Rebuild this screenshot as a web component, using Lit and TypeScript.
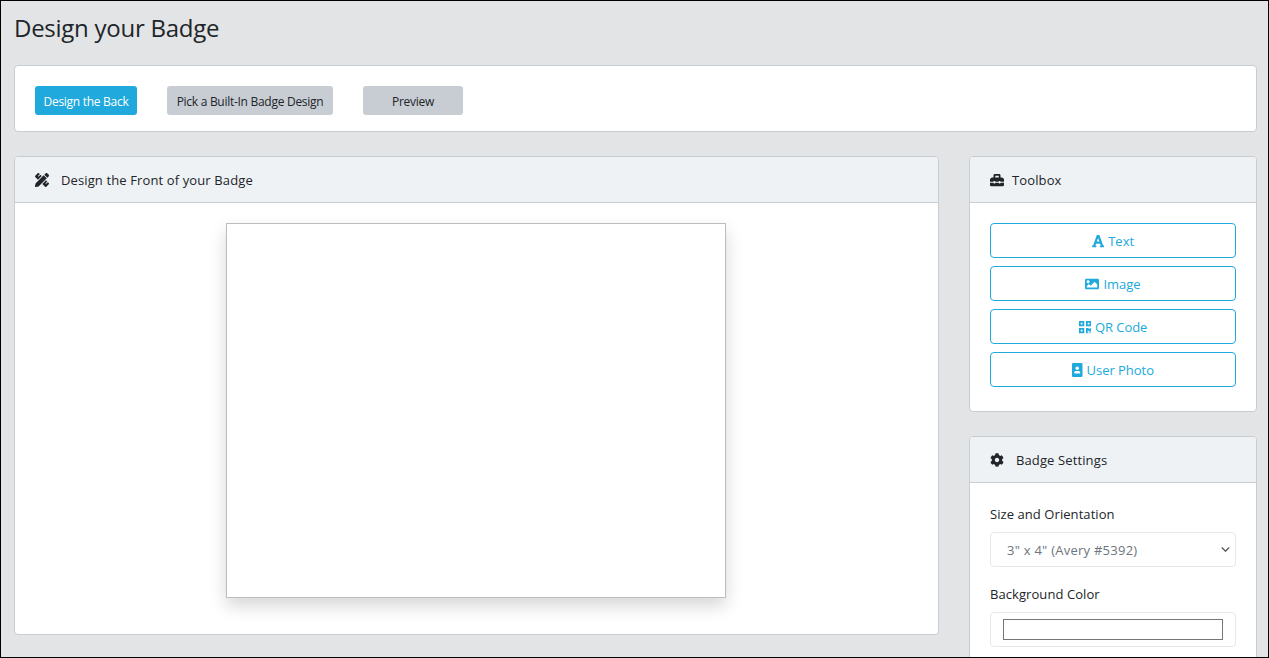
import { LitElement, html, css, svg } from "lit";
import { customElement } from "lit/decorators.js";

const icon = (vb: string, d: string) =>
  html`<svg viewBox=${vb} aria-hidden="true">${svg`<path fill="currentColor" d=${d}></path>`}</svg>`;

const P = {
  ruler: "M109.46 244.04l134.58-134.56-44.12-44.12-61.68 61.68a7.919 7.919 0 0 1-11.21 0l-11.21-11.21c-3.1-3.1-3.1-8.12 0-11.21l61.68-61.68-33.64-33.65C131.47-3.1 111.39-3.1 99 9.29L9.29 99c-12.38 12.39-12.39 32.47 0 44.86l100.17 100.18zm388.47-116.8c18.76-18.76 18.75-49.17 0-67.93l-45.25-45.25c-18.76-18.76-49.18-18.76-67.95 0l-46.02 46.01 113.2 113.2 46.02-46.03zM316.08 82.71l-297 296.96L.32 487.11c-2.53 14.49 10.09 27.11 24.59 24.56l107.45-18.84L429.28 195.9 316.08 82.71zm186.63 285.43l-33.64-33.64-61.68 61.68c-3.1 3.1-8.12 3.1-11.21 0l-11.21-11.21c-3.09-3.1-3.09-8.12 0-11.21l61.68-61.68-44.14-44.14L267.93 402.5l100.21 100.2c12.39 12.39 32.47 12.39 44.86 0l89.71-89.7c12.39-12.39 12.39-32.47 0-44.86z",
  toolbox: "M502.63 214.63l-45.25-45.25c-6-6-14.14-9.37-22.63-9.37H384V80c0-26.51-21.49-48-48-48H176c-26.51 0-48 21.49-48 48v80H77.25c-8.49 0-16.62 3.37-22.63 9.37L9.37 214.63c-6 6-9.37 14.14-9.37 22.63V320h128v-16c0-8.84 7.16-16 16-16h32c8.84 0 16 7.16 16 16v16h128v-16c0-8.84 7.16-16 16-16h32c8.84 0 16 7.16 16 16v16h128v-82.75c0-8.48-3.37-16.62-9.37-22.62zM320 160H192V96h128v64zm64 208c0 8.84-7.16 16-16 16h-32c-8.84 0-16-7.16-16-16v-16H192v16c0 8.84-7.16 16-16 16h-32c-8.84 0-16-7.16-16-16v-16H0v96c0 17.67 14.33 32 32 32h448c17.67 0 32-14.33 32-32v-96H384v16z",
  cog: "M487.4 315.7l-42.6-24.6c4.3-23.2 4.3-47 0-70.2l42.6-24.6c4.9-2.8 7.1-8.6 5.5-14-11.1-35.6-30-67.8-54.7-94.6-3.8-4.1-10-5.1-14.8-2.3L380.8 110c-17.9-15.4-38.5-27.3-60.8-35.1V25.8c0-5.6-3.9-10.5-9.4-11.7-36.7-8.2-74.3-7.8-109.2 0-5.5 1.2-9.4 6.1-9.4 11.7V75c-22.2 7.9-42.8 19.8-60.8 35.1L88.7 85.5c-4.9-2.8-11-1.9-14.8 2.3-24.7 26.7-43.6 58.9-54.7 94.6-1.7 5.4.6 11.2 5.5 14L67.3 221c-4.3 23.2-4.3 47 0 70.2l-42.6 24.6c-4.9 2.8-7.1 8.6-5.5 14 11.1 35.6 30 67.8 54.7 94.6 3.8 4.1 10 5.1 14.8 2.3l42.6-24.6c17.9 15.4 38.5 27.3 60.8 35.1v49.2c0 5.6 3.9 10.5 9.4 11.7 36.7 8.2 74.3 7.8 109.2 0 5.5-1.2 9.4-6.1 9.4-11.7v-49.2c22.2-7.9 42.8-19.8 60.8-35.1l42.6 24.6c4.9 2.8 11 1.9 14.8-2.3 24.7-26.7 43.6-58.9 54.7-94.6 1.5-5.5-.7-11.3-5.6-14.1zM256 336c-44.1 0-80-35.9-80-80s35.9-80 80-80 80 35.9 80 80-35.9 80-80 80z",
  font: "M432 416h-23.41L277.88 53.69A32 32 0 0 0 247.58 32h-47.16a32 32 0 0 0-30.3 21.69L39.41 416H16a16 16 0 0 0-16 16v32a16 16 0 0 0 16 16h128a16 16 0 0 0 16-16v-32a16 16 0 0 0-16-16h-19.58l23.3-64h152.56l23.3 64H304a16 16 0 0 0-16 16v32a16 16 0 0 0 16 16h128a16 16 0 0 0 16-16v-32a16 16 0 0 0-16-16zM176.85 272L224 143.51 271.15 272z",
  image: "M464 448H48c-26.51 0-48-21.49-48-48V112c0-26.51 21.49-48 48-48h416c26.51 0 48 21.49 48 48v288c0 26.51-21.49 48-48 48zM112 120c-30.928 0-56 25.072-56 56s25.072 56 56 56 56-25.072 56-56-25.072-56-56-56zM64 384h384V272l-87.515-87.515c-4.686-4.686-12.284-4.686-16.971 0L208 320l-55.515-55.515c-4.686-4.686-12.284-4.686-16.971 0L64 336v48z",
  qr: "M0 224h192V32H0v192zM64 96h64v64H64V96zm192-64v192h192V32H256zm128 128h-64V96h64v64zM0 480h192V288H0v192zm64-128h64v64H64v-64zm352-64h32v128h-96v-32h-32v96h-64V288h96v32h64v-32zm0 160h32v32h-32v-32zm-64 0h32v32h-32v-32z",
  portrait: "M336 0H48C21.5 0 0 21.5 0 48v416c0 26.5 21.5 48 48 48h288c26.5 0 48-21.5 48-48V48c0-26.5-21.5-48-48-48zM192 128c35.3 0 64 28.7 64 64s-28.7 64-64 64-64-28.7-64-64 28.7-64 64-64zm112 236.8c0 10.6-10 19.2-22.4 19.2H102.4C90 384 80 375.4 80 364.8v-19.2c0-31.8 30.1-57.6 67.2-57.6h5c12.3 5.1 25.7 8 39.8 8s27.6-2.9 39.8-8h5c37.1 0 67.2 25.8 67.2 57.6v19.2z",
};

@customElement("app-root")
export class AppRoot extends LitElement {
  static styles = css`
    :host {
      display: block;
      font-family: "Open Sans", "Noto Sans", sans-serif;
      color: #212529;
    }
    * { box-sizing: border-box; }
    .frame {
      height: 658px;
      overflow: hidden;
      border: 1px solid #000;
      background: #e3e4e6;
      padding: 0 11px 0 13px;
    }
    h1 {
      margin: 0;
      height: 64px;
      padding-top: 9px;
      font-size: 24px;
      font-weight: 400;
      line-height: 36px;
      letter-spacing: -0.26px;
    }
    .card {
      background: #fff;
      border: 1px solid #c8ccd3;
      border-radius: 4px;
    }
    .bar {
      height: 67px;
      display: flex;
      align-items: flex-start;
      gap: 30px;
      padding: 20px 20px 0;
      margin-bottom: 24px;
    }
    .btn {
      height: 29px;
      display: flex;
      align-items: center;
      justify-content: center;
      padding-top: 2px;
      border-radius: 3px;
      font-size: 12px;
      letter-spacing: -0.28px;
      background: #c8ccd3;
      white-space: nowrap;
    }
    .btn.primary { width: 102px; background: #20a9dc; color: #fff; }
    .btn.pick { width: 166px; }
    .btn.preview { width: 100px; }
    .cols {
      display: grid;
      grid-template-columns: 925px 288px;
      column-gap: 30px;
      align-items: start;
    }
    .side { display: flex; flex-direction: column; gap: 24px; }
    .head {
      height: 46px;
      display: flex;
      align-items: center;
      padding: 0 20px;
      background: #eff2f5;
      border-bottom: 1px solid #c8ccd3;
      border-radius: 3px 3px 0 0;
      font-size: 13px;
      letter-spacing: 0.12px;
    }
    .head svg { height: 14px; width: auto; display: block; }
    .gap-wide { margin-left: 12px; }
    .gap-tight { margin-left: 8px; }
    .canvas-body {
      height: 431px;
      display: flex;
      justify-content: center;
      padding: 20px 1px 0 0;
    }
    .badge {
      width: 500px;
      height: 375px;
      background: #fff;
      border: 1px solid #bdbdbd;
      box-shadow: 0 8px 16px rgba(0, 0, 0, 0.16);
    }
    .tools {
      height: 208px;
      padding: 20px 20px 0;
      display: flex;
      flex-direction: column;
      gap: 8px;
    }
    .tool {
      height: 35px;
      border: 1px solid #20a9dc;
      border-radius: 4px;
      color: #20a9dc;
      display: flex;
      align-items: center;
      justify-content: center;
      gap: 4px;
      font-size: 13px;
      letter-spacing: -0.04px;
    }
    .tool svg { height: 14px; width: auto; display: block; }
    .settings { padding: 20px 20px 0; height: 180px; }
    label {
      display: block;
      font-size: 13px;
      line-height: 22px;
      letter-spacing: 0.07px;
      margin-bottom: 7px;
    }
    .field {
      height: 35px;
      border: 1px solid #e6e8eb;
      border-radius: 4px;
      background: #fff;
    }
    .select {
      display: flex;
      align-items: center;
      justify-content: space-between;
      padding: 0 5px 0 16px;
      color: #6c757d;
      font-size: 13px;
      letter-spacing: 0.25px;
      margin-bottom: 16px;
    }
    .select svg { width: 9px; height: 9px; display: block; color: #555; }
    .color { padding: 6px 12px; }
    .swatch {
      height: 21px;
      background: #fff;
      border: 1px solid #767676;
    }
  `;

  render() {
    return html`
      <div class="frame">
        <h1>Design your Badge</h1>
        <div class="card bar">
          <div class="btn primary">Design the Back</div>
          <div class="btn pick">Pick a Built-In Badge Design</div>
          <div class="btn preview">Preview</div>
        </div>
        <div class="cols">
          <section class="card">
            <div class="head">
              ${icon("0 0 512 512", P.ruler)}
              <span class="gap-wide">Design the Front of your Badge</span>
            </div>
            <div class="canvas-body"><div class="badge"></div></div>
          </section>
          <div class="side">
            <section class="card">
              <div class="head">${icon("0 0 512 512", P.toolbox)}<span class="gap-tight">Toolbox</span></div>
              <div class="tools">
                <div class="tool">${icon("0 0 448 512", P.font)}<span>Text</span></div>
                <div class="tool">${icon("0 0 512 512", P.image)}<span>Image</span></div>
                <div class="tool">${icon("0 0 448 512", P.qr)}<span>QR Code</span></div>
                <div class="tool">${icon("0 0 384 512", P.portrait)}<span>User Photo</span></div>
              </div>
            </section>
            <section class="card">
              <div class="head">${icon("0 0 512 512", P.cog)}<span class="gap-wide">Badge Settings</span></div>
              <div class="settings">
                <label>Size and Orientation</label>
                <div class="field select">
                  <span>3" x 4" (Avery #5392)</span>
                  <svg viewBox="0 0 16 16"><path d="M2 5l6 6 6-6" fill="none" stroke="currentColor" stroke-width="2.2" stroke-linecap="round" stroke-linejoin="round"></path></svg>
                </div>
                <label>Background Color</label>
                <div class="field color"><div class="swatch"></div></div>
              </div>
            </section>
          </div>
        </div>
      </div>
    `;
  }
}
